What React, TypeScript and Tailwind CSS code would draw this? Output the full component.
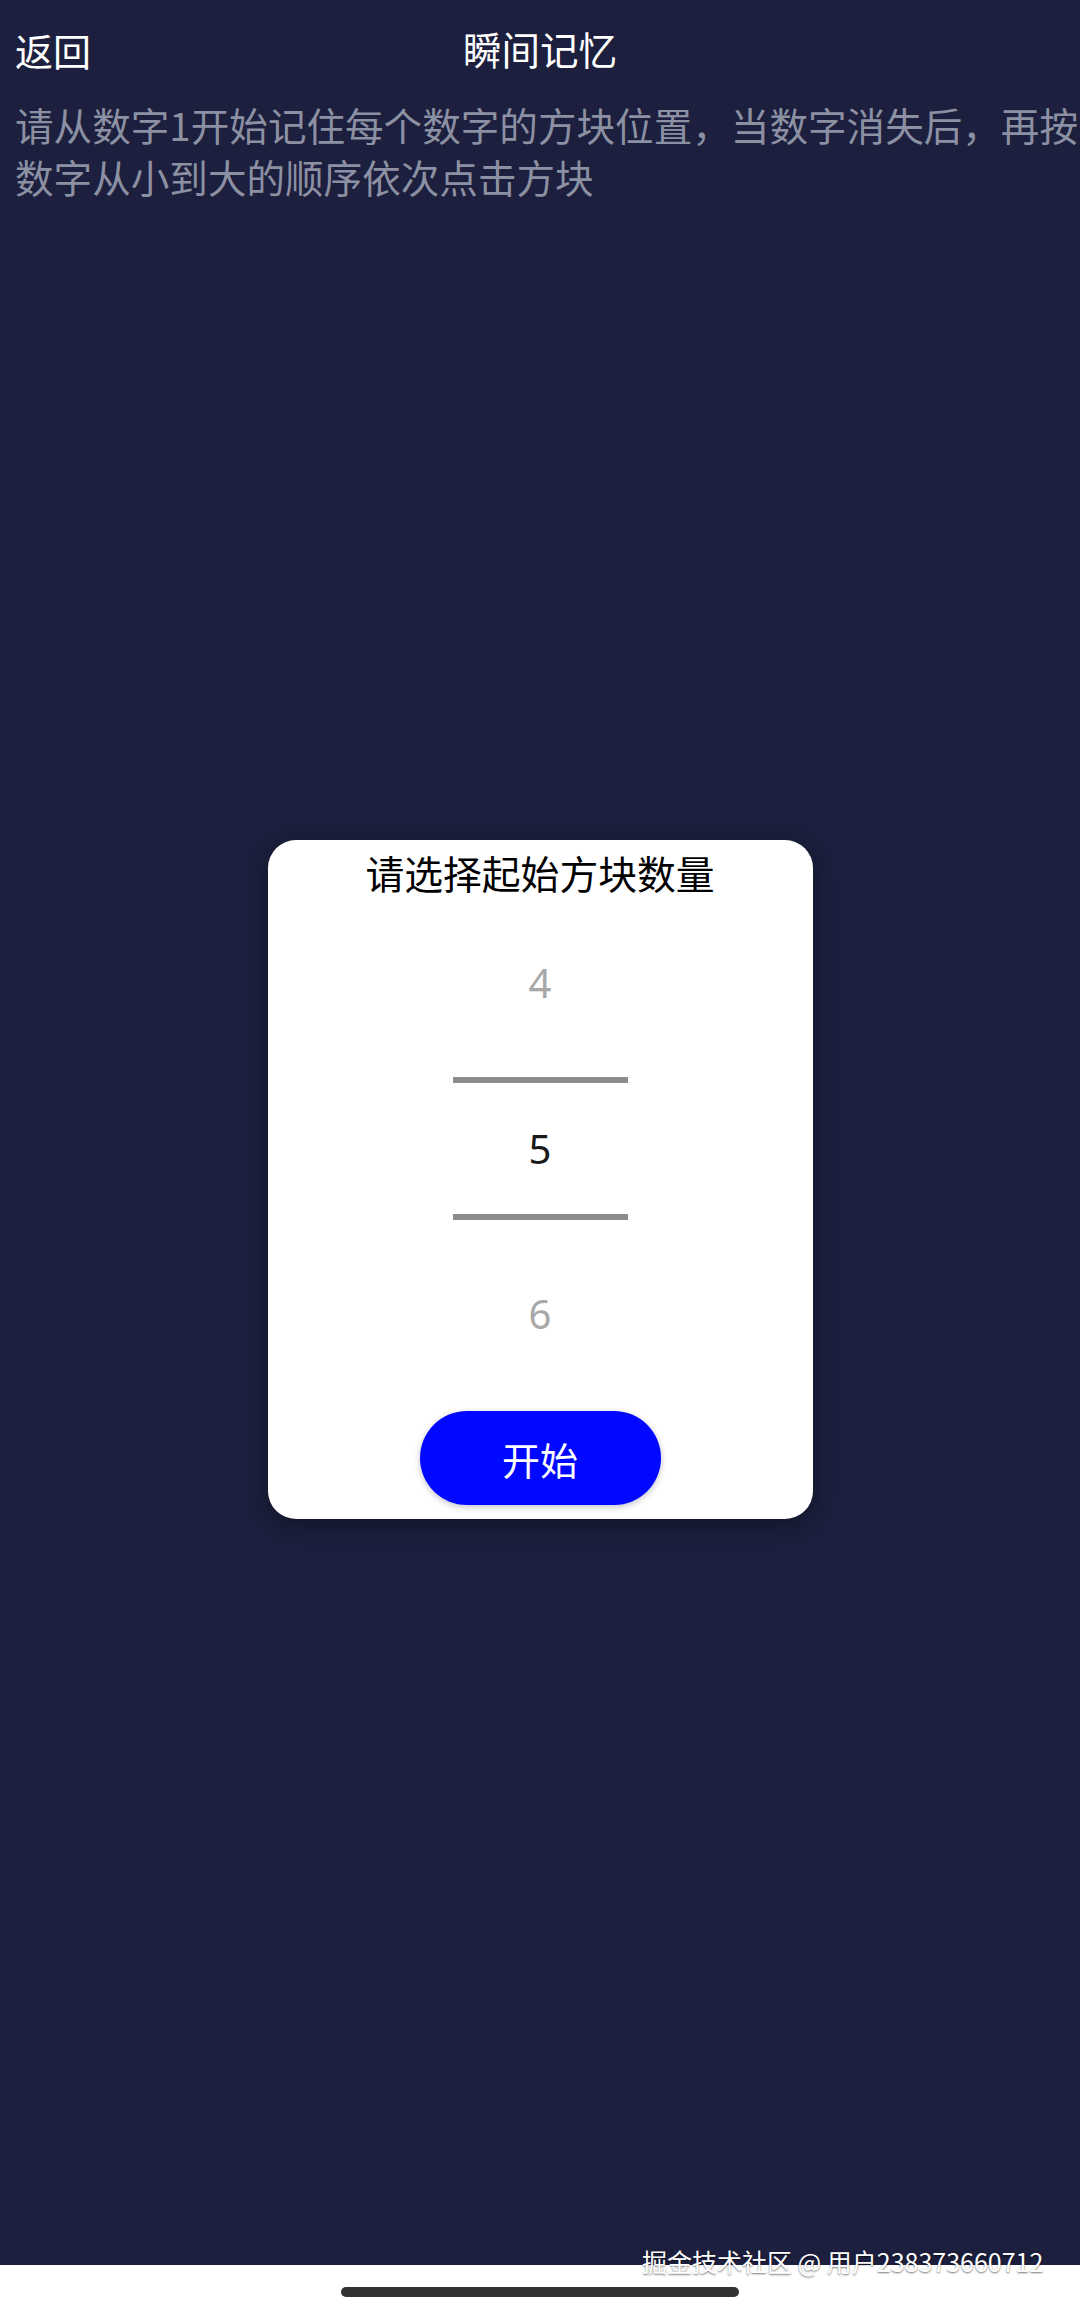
import { useState } from "react"

const cjk = "font-['Noto_Sans_CJK_SC','Noto_Sans',sans-serif]"

const counts = [4, 5, 6]

function Picker({ value }: { value: number }) {
  const idx = counts.indexOf(value)
  const prev = counts[idx - 1]
  const next = counts[idx + 1]

  return (
    <div className="flex flex-col items-center font-['Noto_Sans','Noto_Sans_CJK_SC',sans-serif]">
      <div className="h-[158px] flex items-center justify-center text-[40px] text-[#a8a8a8]">
        {prev}
      </div>
      <div className="mt-[15px] h-[6px] w-[175px] bg-[#8c8c8c]" />
      <div className="h-[131px] flex items-center justify-center text-[40px] text-[#1a1a1a]">
        {value}
      </div>
      <div className="h-[6px] w-[175px] bg-[#8c8c8c]" />
      <div className="h-[188px] flex items-center justify-center text-[40px] text-[#a8a8a8]">
        {next}
      </div>
    </div>
  )
}

export default function App() {
  const [count] = useState(5)

  return (
    <div className={`relative h-[2310px] w-[1080px] flex flex-col bg-[#1c1f3d] ${cjk}`}>
      {/* header */}
      <div className="relative h-[98px] flex items-center px-[15px]">
        <span className="text-[38px] text-white">返回</span>
        <span className="absolute left-1/2 -translate-x-1/2 text-[38.5px] text-white">瞬间记忆</span>
      </div>

      {/* rules */}
      <div className="pl-[15px] text-[38.6px] leading-[52px] text-[#8c90a3]">
        <p className="whitespace-nowrap">请从数字1开始记住每个数字的方块位置，当数字消失后，再按</p>
        <p className="whitespace-nowrap">数字从小到大的顺序依次点击方块</p>
      </div>

      {/* dialog */}
      <div className="mt-[638px] mx-auto w-[545px] h-[679px] bg-white rounded-[28px] shadow-[0_6px_24px_rgba(0,0,0,0.35)] flex flex-col items-center">
        <div className="h-[64px] flex items-center text-[38.8px] text-black">
          请选择起始方块数量
        </div>
        <Picker value={count} />
        <button className="mt-[3px] w-[241px] h-[94px] rounded-full bg-[#0008ff] text-white text-[38px] shadow-[0_2px_6px_rgba(0,0,60,0.25)]">
          开始
        </button>
      </div>

      <div className="flex-1" />

      {/* system nav area */}
      <div className="h-[45px] bg-white flex items-center justify-center">
        <div className="mt-[8px] w-[398px] h-[10px] rounded-full bg-[#333333]" />
      </div>

      {/* watermark */}
      <div className="absolute left-[642px] top-[2245px] text-[25px] leading-[32px] text-white whitespace-nowrap [text-shadow:0_1px_2px_rgba(0,0,0,0.55)]">
        掘金技术社区 @ 用户238373660712
      </div>
    </div>
  )
}
